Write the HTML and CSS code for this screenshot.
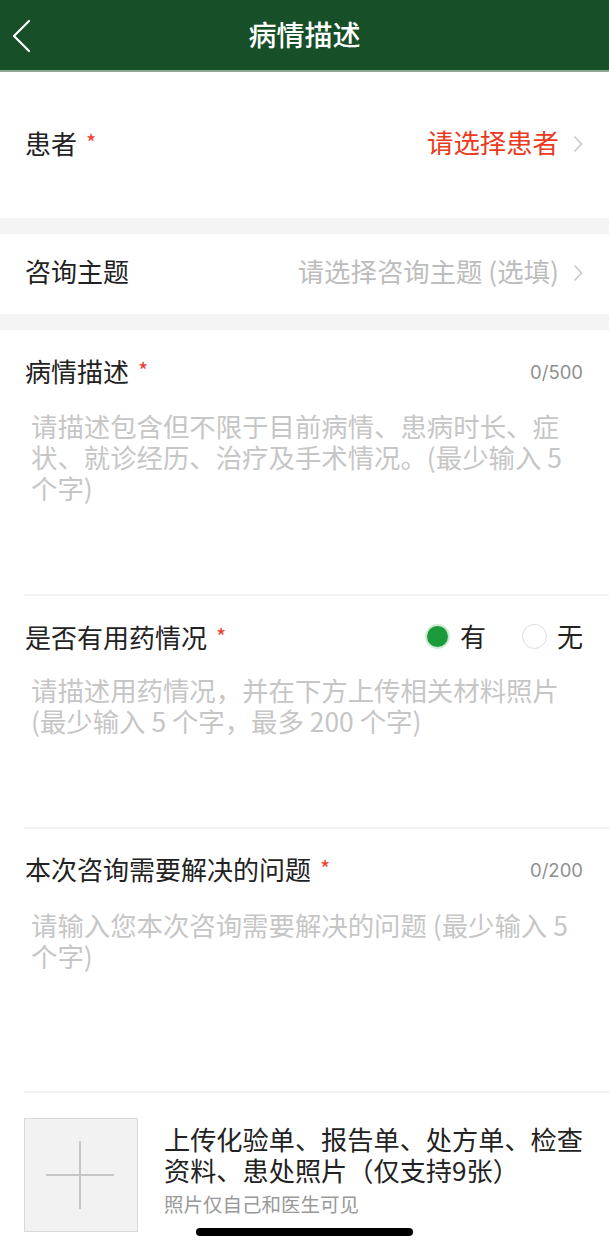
FILE: index.html
```html
<!DOCTYPE html>
<html lang="zh-CN">
<head>
<meta charset="utf-8">
<title>病情描述</title>
<link rel="stylesheet" href="styles.css">
</head>
<body>
<div class="page">
  <header class="nav">
    <svg class="nav-back" width="20" height="34" viewBox="0 0 20 34"><path d="M17 2 L2 17 L17 32" fill="none" stroke="#fff" stroke-width="2.2" stroke-linecap="round" stroke-linejoin="round"/></svg>
    <h1 class="nav-title">病情描述</h1>
  </header>

  <div class="row row-patient">
    <div class="row-label">患者<span class="req">*</span></div>
    <div class="row-value value-red">请选择患者<svg class="chev" width="10" height="18" viewBox="0 0 10 18"><path d="M1.5 1.5 L8.5 9 L1.5 16.5" fill="none" stroke="#c8c8c8" stroke-width="1.6"/></svg></div>
  </div>
  <div class="band"></div>
  <div class="row row-topic">
    <div class="row-label">咨询主题</div>
    <div class="row-value value-gray">请选择咨询主题 (选填)<svg class="chev" width="10" height="18" viewBox="0 0 10 18"><path d="M1.5 1.5 L8.5 9 L1.5 16.5" fill="none" stroke="#c8c8c8" stroke-width="1.6"/></svg></div>
  </div>
  <div class="band"></div>

  <section class="field field-1">
    <div class="field-inner">
      <div class="field-head">
        <div class="field-label">病情描述<span class="req">*</span></div>
        <div class="counter">0/500</div>
      </div>
      <div class="placeholder ph-1">请描述包含但不限于目前病情、患病时长、症<br>状、就诊经历、治疗及手术情况。(最少输入 5<br>个字)</div>
    </div>
  </section>

  <section class="field field-2">
    <div class="field-inner">
      <div class="field-head">
        <div class="field-label">是否有用药情况<span class="req">*</span></div>
        <div class="radios">
          <span class="radio radio-on"></span><span class="radio-text">有</span>
          <span class="radio radio-off"></span><span class="radio-text">无</span>
        </div>
      </div>
      <div class="placeholder ph-2">请描述用药情况，并在下方上传相关材料照片<br>(最少输入 5 个字，最多 200 个字)</div>
    </div>
  </section>

  <section class="field field-3">
    <div class="field-inner">
      <div class="field-head">
        <div class="field-label">本次咨询需要解决的问题<span class="req">*</span></div>
        <div class="counter">0/200</div>
      </div>
      <div class="placeholder ph-3">请输入您本次咨询需要解决的问题 (最少输入 5<br>个字)</div>
    </div>
  </section>

  <section class="upload">
    <div class="upload-box">
      <svg width="70" height="70" viewBox="0 0 70 70"><path d="M0 35 H68 M34 1 V69" stroke="#c6c6c6" stroke-width="2"/></svg>
    </div>
    <div class="upload-text">
      <div class="upload-title">上传化验单、报告单、处方单、检查资料、患处照片（仅支持9张）</div>
      <div class="upload-sub">照片仅自己和医生可见</div>
    </div>
  </section>

  <div class="home-indicator"></div>
</div>
</body>
</html>
```

FILE: styles.css
```css
* { box-sizing: border-box; }
html, body { margin: 0; padding: 0; background: #fff; }
body {
  font-family: "Noto Sans CJK SC", "Noto Sans", sans-serif;
  color: #222;
}
.page {
  position: relative;
  width: 609px;
  height: 1247px;
  overflow: hidden;
  background: #fff;
}
.nav {
  height: 72px;
  background: #174f28;
  border-bottom: 2px solid #8ea896;
  display: flex;
  align-items: center;
  justify-content: center;
  position: relative;
}
.nav-back {
  position: absolute;
  left: 12px;
  top: 19px;
}
.nav-title {
  margin: 0;
  font-size: 28px;
  font-weight: 500;
  color: #fff;
  line-height: 36px;
  padding-bottom: 3px;
}
.row {
  display: flex;
  align-items: center;
  justify-content: space-between;
  padding: 0 26px 6px 25px;
}
.row-patient { height: 146px; }
.row-topic { height: 80px; }
.row-label {
  font-size: 26px;
  line-height: 36px;
  color: #222;
}
.req {
  color: #ef3d2c;
  font-size: 22px;
  margin-left: 9px;
  vertical-align: 3px;
}
.row-value {
  display: flex;
  align-items: center;
  font-size: 26.4px;
  line-height: 36px;
}
.value-red { color: #ec3a22; }
.value-gray { color: #bdbdbd; }
.chev { margin-left: 14px; margin-top: 4px; }
.band {
  height: 16px;
  background: #f4f4f4;
}
.field {
  padding-left: 24px;
}
.field-inner {
  border-bottom: 2px solid #f2f2f2;
  padding-right: 26px;
}
.field-1 .field-inner { padding-top: 22px; height: 266px; }
.field-2 .field-inner { padding-top: 22px; height: 233px; }
.field-3 .field-inner { padding-top: 21px; height: 264px; }
.field-head {
  display: flex;
  align-items: center;
  justify-content: space-between;
  height: 36px;
  padding-left: 1px;
}
.field-label {
  font-size: 26px;
  line-height: 36px;
  color: #222;
}
.counter {
  font-family: Inter, "Noto Sans CJK SC", sans-serif;
  font-size: 18.5px;
  color: #8f8f8f;
  padding-top: 3px;
}
.placeholder {
  font-size: 26.4px;
  line-height: 31px;
  color: #c6c6c6;
  padding-left: 7px;
}
.ph-1 { margin-top: 22px; }
.ph-2 { margin-top: 20px; }
.ph-3 { margin-top: 23px; }
.radios {
  display: flex;
  align-items: center;
  font-size: 26px;
  line-height: 36px;
}
.radio {
  width: 25px;
  height: 25px;
  border-radius: 50%;
  display: inline-block;
}
.radio-on {
  background: #1b9a3b;
  border: 2px solid #cfe9d4;
  margin-right: 10px;
}
.radio-off {
  border: 1.5px solid #dedede;
  margin-left: 36px;
  margin-right: 10px;
}
.radio-text { color: #222; }
.upload {
  display: flex;
  align-items: flex-start;
  padding: 25px 24px 0 24px;
}
.upload-box {
  width: 114px;
  height: 114px;
  flex: none;
  background: #f2f2f2;
  border: 1px solid #d9d9d9;
  display: flex;
  align-items: center;
  justify-content: center;
}
.upload-text {
  margin-left: 26px;
  padding-top: 6px;
}
.upload-title {
  font-size: 26.2px;
  line-height: 31px;
  color: #222;
}
.upload-sub {
  margin-top: 4px;
  font-size: 19.5px;
  line-height: 28px;
  color: #999;
}
.home-indicator {
  position: absolute;
  left: 196px;
  bottom: 11px;
  width: 217px;
  height: 8px;
  border-radius: 4px;
  background: #000;
}
```
